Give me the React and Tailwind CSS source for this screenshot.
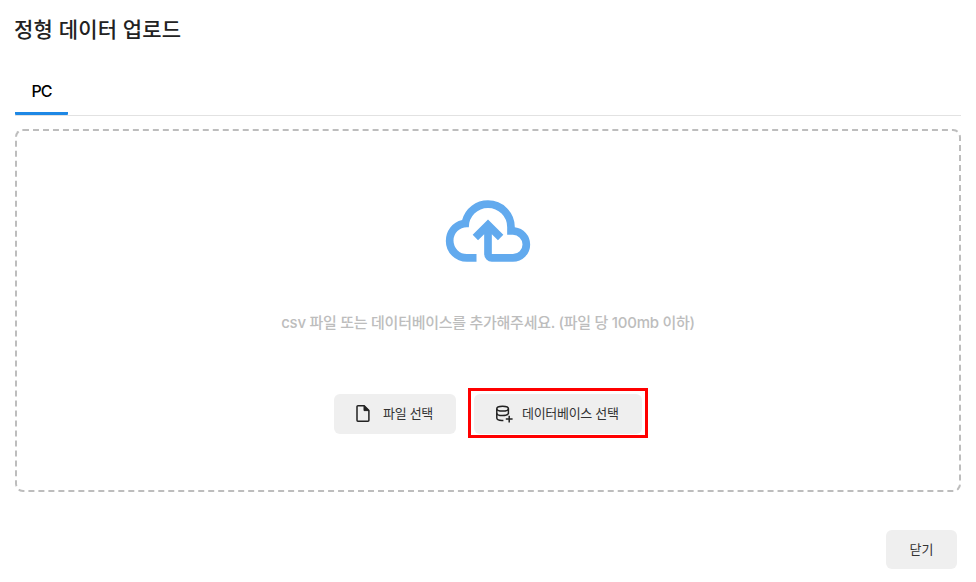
import React from "react";

function CloudUploadIcon() {
  return (
    <svg viewBox="0 0 24 24" className="size-[92px] text-[#62aaee]" fill="currentColor" aria-hidden="true">
      <path d="M6.5 20q-2.28 0-3.89-1.57Q1 16.85 1 14.58q0-1.95 1.17-3.48 1.18-1.53 3.08-1.95.63-2.3 2.5-3.72Q9.63 4 12 4q2.93 0 4.96 2.04Q19 8.07 19 11q1.73.2 2.86 1.5 1.14 1.28 1.14 3 0 1.88-1.31 3.19T18.5 20H13q-.82 0-1.41-.59Q11 18.83 11 18v-5.15L9.4 14.4 8 13l4-4 4 4-1.4 1.4-1.6-1.55V18h5.5q1.05 0 1.77-.73.73-.72.73-1.77t-.73-1.77Q19.55 13 18.5 13H17v-2q0-2.07-1.46-3.54Q14.08 6 12 6 9.93 6 8.46 7.46 7 8.93 7 11h-.5q-1.45 0-2.47 1.03Q3 13.05 3 14.5q0 1.45 1.03 2.5 1.02 1 2.47 1H9v2Z" />
    </svg>
  );
}

function FileIcon() {
  return (
    <svg viewBox="0 0 20 20" className="size-5" fill="none" stroke="#222" strokeWidth="1.5" strokeLinejoin="round" aria-hidden="true">
      <path d="M4.9 1.8h6.3l4.7 4.7v9.8a.9.9 0 0 1-.9.9H4.9a.9.9 0 0 1-.9-.9V2.7a.9.9 0 0 1 .9-.9Z" />
      <path d="M11 1.8v4.8h4.9Z" fill="#222" strokeWidth="1" />
    </svg>
  );
}

function DatabasePlusIcon() {
  return (
    <svg viewBox="0 0 20 20" className="size-5" fill="none" stroke="#222" strokeWidth="1.5" aria-hidden="true">
      <ellipse cx="8.6" cy="4.7" rx="5.8" ry="2.4" />
      <path d="M2.8 4.7v9.4c0 1.4 2.2 2.4 5 2.5h1.6" />
      <path d="M14.4 4.7v5.4" />
      <path d="M2.8 9.2c0 1.4 2.5 2.4 5.8 2.4 2.6 0 4.8-.6 5.6-1.7" />
      <path d="M11.8 15h6.8M15.2 11.7v6.8" />
    </svg>
  );
}

export default function App() {
  return (
    <main className="flex h-[582px] w-[976px] flex-col bg-white px-[15px] pt-[15px] font-['Inter','Noto_Sans_CJK_KR',sans-serif] text-[#222]">
      <h1 className="-ml-px h-[30px] text-[21px] leading-[30px] font-medium tracking-[0.15px] whitespace-nowrap">정형 데이터 업로드</h1>
      <nav className="mt-[23px] flex h-[48px] border-b border-[#e2e2e2]">
        <button className="h-[47px] w-[53px] rounded-[1px] border-b-[3px] border-[#1e88e5] pt-[2px] text-[16px] font-medium tracking-[-0.9px] text-black">PC</button>
      </nav>
      <section className="mt-[13px] flex h-[363px] shrink-0 flex-col items-center rounded-[8px] border-2 border-dashed border-[#bdbdbd] pt-[53.5px]">
        <CloudUploadIcon />
        <p className="mt-[35.5px] h-[22px] text-[15px] leading-[22px] font-medium tracking-[-0.27px] whitespace-nowrap text-[#bdbdbd]">csv 파일 또는 데이터베이스를 추가해주세요. (파일 당 100mb 이하)</p>
        <div className="mt-[54px] flex w-full items-start gap-[12px] pl-[317px] text-[13px] tracking-[-0.3px] whitespace-nowrap text-[#333]">
          <button className="mt-[6px] flex h-10 w-[122px] items-center gap-[10px] rounded-[6px] bg-[#efefef] pl-[19px]">
            <FileIcon />
            <span>파일 선택</span>
          </button>
          <div className="flex h-[50px] w-[180px] justify-center border-[3px] border-[#ff0000] pt-[3px]">
            <button className="flex h-10 w-[168px] items-center gap-[8px] rounded-[6px] bg-[#efefef] pl-[20px]">
              <DatabasePlusIcon />
              <span>데이터베이스 선택</span>
            </button>
          </div>
        </div>
      </section>
      <footer className="mt-[38px] flex justify-end pr-[4px]">
        <button className="h-[39px] w-[71px] rounded-[6px] bg-[#efefef] text-[13px] text-[#333]">닫기</button>
      </footer>
    </main>
  );
}
